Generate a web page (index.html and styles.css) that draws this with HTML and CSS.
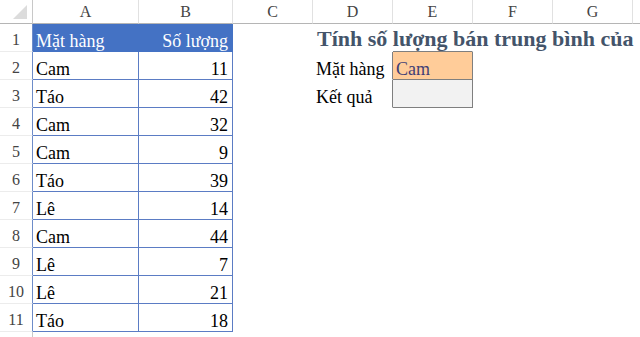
FILE: index.html
```html
<!DOCTYPE html>
<html lang="vi">
<head>
<meta charset="utf-8">
<title>Sheet</title>
<link rel="stylesheet" href="styles.css">
</head>
<body>
<table class="sheet">
  <colgroup>
    <col class="w-rh"><col class="w-a"><col class="w-b"><col class="w-c"><col class="w-c"><col class="w-c"><col class="w-c"><col class="w-c"><col class="w-rest">
  </colgroup>
  <tr class="hdr">
    <th class="corner"><svg class="tri" width="14" height="14" viewBox="0 0 14 14"><polygon points="14,0 14,14 0,14" fill="#dcdcdc"/></svg></th>
    <th>A</th><th>B</th><th>C</th><th>D</th><th>E</th><th>F</th><th>G</th><th class="edge"></th>
  </tr>
  <tr>
    <th class="rh tb">1</th>
    <td class="t-head">Mặt hàng</td><td class="t-head num">Số lượng</td>
    <td></td><td class="title">Tính số lượng bán trung bình của</td><td class="e-top"></td><td></td><td></td><td></td>
  </tr>
  <tr>
    <th class="rh tb">2</th>
    <td class="ta">Cam</td><td class="tbv num">11</td>
    <td></td><td class="lbl">Mặt hàng</td><td class="input">Cam</td><td></td><td></td><td></td>
  </tr>
  <tr>
    <th class="rh tb">3</th>
    <td class="ta">Táo</td><td class="tbv num">42</td>
    <td></td><td class="lbl">Kết quả</td><td class="calc"></td><td></td><td></td><td></td>
  </tr>
  <tr><th class="rh tb">4</th><td class="ta">Cam</td><td class="tbv num">32</td><td></td><td></td><td></td><td></td><td></td><td></td></tr>
  <tr><th class="rh tb">5</th><td class="ta">Cam</td><td class="tbv num">9</td><td></td><td></td><td></td><td></td><td></td><td></td></tr>
  <tr><th class="rh tb">6</th><td class="ta">Táo</td><td class="tbv num">39</td><td></td><td></td><td></td><td></td><td></td><td></td></tr>
  <tr><th class="rh tb">7</th><td class="ta">Lê</td><td class="tbv num">14</td><td></td><td></td><td></td><td></td><td></td><td></td></tr>
  <tr><th class="rh tb">8</th><td class="ta">Cam</td><td class="tbv num">44</td><td></td><td></td><td></td><td></td><td></td><td></td></tr>
  <tr><th class="rh tb">9</th><td class="ta">Lê</td><td class="tbv num">7</td><td></td><td></td><td></td><td></td><td></td><td></td></tr>
  <tr><th class="rh tb">10</th><td class="ta">Lê</td><td class="tbv num">21</td><td></td><td></td><td></td><td></td><td></td><td></td></tr>
  <tr><th class="rh tb">11</th><td class="ta">Táo</td><td class="tbv num">18</td><td></td><td></td><td></td><td></td><td></td><td></td></tr>
  <tr class="tail"><th class="rh"></th><td></td><td></td><td></td><td></td><td></td><td></td><td></td><td></td></tr>
</table>
</body>
</html>
```

FILE: styles.css
```css
html, body {
  margin: 0;
  padding: 0;
  background: #ffffff;
  overflow: hidden;
}

body {
  width: 640px;
  height: 337px;
  font-family: "Liberation Serif", "Times New Roman", serif;
}

.sheet {
  table-layout: fixed;
  border-collapse: separate;
  border-spacing: 0;
  width: 640px;
}

.w-rh { width: 33px; }
.w-a { width: 106px; }
.w-b { width: 94px; }
.w-c { width: 80px; }
.w-rest { width: 7px; }

.sheet th,
.sheet td {
  box-sizing: border-box;
  padding: 0;
  border-right: 1px solid transparent;
  border-bottom: 1px solid transparent;
  white-space: nowrap;
}

.sheet tr {
  height: 28px;
}

.sheet td {
  height: 28px;
  font-size: 18px;
  line-height: 20px;
  vertical-align: bottom;
  padding-left: 3px;
  color: #000;
}

/* column header row */
.sheet tr.hdr {
  height: 24px;
}
.sheet tr.hdr th {
  height: 24px;
  font-weight: normal;
  font-size: 16px;
  line-height: 20px;
  color: #444444;
  text-align: center;
  vertical-align: middle;
  border-right: 1px solid #e1e1e1;
  border-bottom: 1px solid #b5b5b5;
  background: #ffffff;
}
.sheet tr.hdr th.edge {
  border-right: none;
}
.corner {
  position: relative;
}
.tri {
  position: absolute;
  right: 5px;
  bottom: 4px;
}
.sheet tr.hdr th.corner {
  border-right: 1px solid #c8c8c8;
}

/* row headers */
.rh {
  height: 28px;
  font-weight: normal;
  font-size: 16px;
  line-height: 20px;
  color: #444444;
  text-align: center;
  vertical-align: bottom;
  padding-bottom: 1px !important;
  border-right: 1px solid #c8c8c8 !important;
  border-bottom: 1px solid #ececec !important;
}
.rh.tb {
  border-right: 1px solid #6d8cc9 !important;
}

/* trailing partial row */
.sheet tr.tail,
.sheet tr.tail th,
.sheet tr.tail td {
  height: 6px;
  line-height: 6px;
  font-size: 6px;
  padding: 0 !important;
  border-bottom: none !important;
}

/* table */
.t-head {
  background: #4472c4;
  color: #ffffff !important;
  border-right: 1px solid #4472c4 !important;
  border-bottom: 1px solid #4472c4 !important;
}
.ta,
.tbv {
  border-right: 1px solid #5b7cc4 !important;
  border-bottom: 1px solid #5b7cc4 !important;
}
.num {
  text-align: right;
  padding-right: 4px !important;
}

/* title & side block */
.title {
  font-size: 22px !important;
  line-height: 24px !important;
  font-weight: bold;
  color: #44546a !important;
  padding-left: 4px !important;
  overflow: visible;
}
.lbl {
  border-right: 1px solid #7f7f7f !important;
}
.e-top {
  border-bottom: 1px solid #7f7f7f !important;
}
.input {
  background: #ffcc99;
  color: #3f3f76 !important;
  border-right: 1px solid #7f7f7f !important;
  border-bottom: 1px solid #7f7f7f !important;
}
.calc {
  background: #f2f2f2;
  border-right: 1px solid #7f7f7f !important;
  border-bottom: 1px solid #7f7f7f !important;
}
```
